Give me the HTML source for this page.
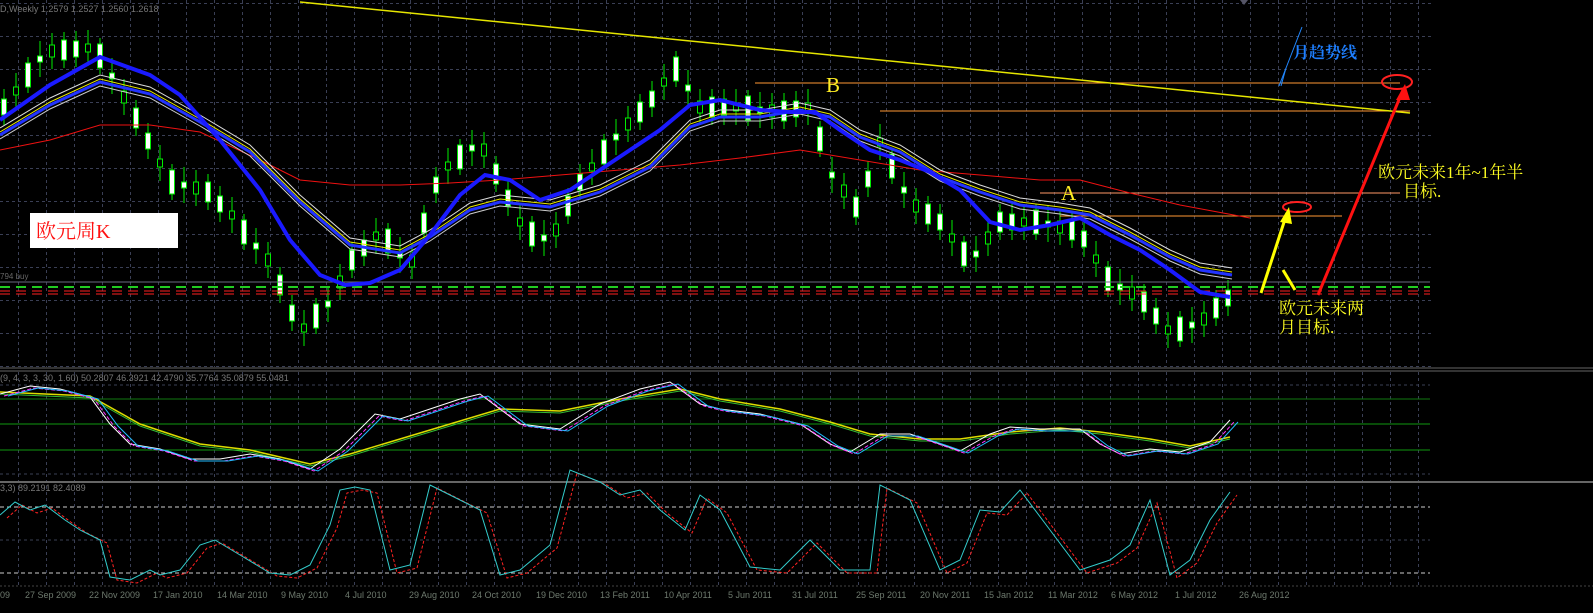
<!DOCTYPE html>
<html><head><meta charset="utf-8"><style>
html,body{margin:0;padding:0;background:#000;}
svg{display:block}
text{font-family:"Liberation Sans",sans-serif;}
.cj{font-family:"Liberation Serif","Noto Serif CJK SC","Noto Sans CJK SC",serif;}
</style></head><body>
<svg width="1593" height="613" viewBox="0 0 1593 613" xmlns="http://www.w3.org/2000/svg">
<defs>
<pattern id="pv" x="18" y="0" width="28" height="6" patternUnits="userSpaceOnUse"><rect x="0" y="0" width="1" height="3" fill="#3a3f55"/></pattern>
<pattern id="ph" x="0" y="3" width="6" height="33" patternUnits="userSpaceOnUse"><rect x="0" y="0" width="3" height="1" fill="#3a3f55"/></pattern>
</defs>
<rect width="1593" height="613" fill="#000"/>
<rect x="0" y="0" width="1432" height="367" fill="url(#pv)"/>
<rect x="0" y="0" width="1432" height="367" fill="url(#ph)"/>
<rect x="0" y="372" width="1432" height="109" fill="url(#pv)"/>
<rect x="0" y="484" width="1432" height="102" fill="url(#pv)"/>
<g stroke="#3a3f55" stroke-dasharray="3,3"><line x1="0" y1="385" x2="1430" y2="385"/><line x1="0" y1="474" x2="1430" y2="474"/><line x1="0" y1="540" x2="1430" y2="540"/></g>
<!-- candles -->
<path fill="none" stroke="#00ee00" stroke-width="1" d="M4 89V125M16 73V109M28 57V93M40 41V77M52 33V69M64 32V68M76 31V67M88 30V66M100 38V74M112 58V94M124 79V115M136 100V136M148 123V159M160 145V181M172 164V200M184 167V203M196 170V206M208 174V210M220 186V222M232 197V233M244 214V250M256 228V264M268 242V278M280 267V303M292 295V331M304 310V346M316 298V334M328 286V322M340 264V300M352 242V278M364 230V266M376 218V254M388 223V259M400 237V273M412 243V279M424 205V241M436 167V203M448 148V184M460 139V175M472 130V166M484 132V168M496 156V192M508 180V216M520 204V240M532 216V252M544 220V256M556 212V248M568 188V224M580 164V200M592 149V185M604 134V170M616 119V155M628 106V142M640 94V130M652 81V117M664 64V100M676 51V87M688 70V106M700 89V125M712 89V125M724 89V125M736 89V125M748 90V126M760 92V128M772 93V129M784 93V129M796 91V127M808 89V125M820 121V157M832 157V193M844 173V209M856 189V225M868 161V197M880 124V160M892 148V184M904 172V208M916 188V224M928 196V232M940 204V240M952 220V256M964 236V272M976 236V272M988 220V256M1000 204V240M1012 204V240M1024 204V240M1036 204V240M1048 206V242M1060 209V245M1072 212V248M1084 221V257M1096 241V277M1108 261V297M1120 269V305M1132 275V311M1144 284V320M1156 298V334M1168 312V348M1180 311V347M1192 307V343M1204 301V337M1216 290V326M1228 280V316"/>
<path fill="#fff" stroke="#00ee00" stroke-width="1" d="M1.5 99h5v16h-5zM25.5 63h5v24h-5zM37.5 56h5v6h-5zM61.5 40h5v20h-5zM73.5 41h5v16h-5zM97.5 44h5v24h-5zM109.5 73h5v6h-5zM133.5 108h5v20h-5zM145.5 133h5v16h-5zM169.5 170h5v24h-5zM181.5 182h5v6h-5zM205.5 182h5v20h-5zM217.5 196h5v16h-5zM241.5 220h5v24h-5zM253.5 243h5v6h-5zM277.5 275h5v20h-5zM289.5 305h5v16h-5zM313.5 304h5v24h-5zM325.5 301h5v6h-5zM349.5 250h5v20h-5zM361.5 240h5v16h-5zM385.5 229h5v24h-5zM397.5 252h5v6h-5zM421.5 213h5v20h-5zM433.5 177h5v16h-5zM457.5 145h5v24h-5zM469.5 145h5v6h-5zM493.5 164h5v20h-5zM505.5 190h5v16h-5zM529.5 222h5v24h-5zM541.5 235h5v6h-5zM565.5 196h5v20h-5zM577.5 174h5v16h-5zM601.5 140h5v24h-5zM613.5 134h5v6h-5zM637.5 102h5v20h-5zM649.5 91h5v16h-5zM673.5 57h5v24h-5zM685.5 85h5v6h-5zM709.5 97h5v20h-5zM721.5 99h5v16h-5zM745.5 96h5v24h-5zM757.5 107h5v6h-5zM781.5 101h5v20h-5zM793.5 101h5v16h-5zM817.5 127h5v24h-5zM829.5 172h5v6h-5zM853.5 197h5v20h-5zM865.5 171h5v16h-5zM889.5 154h5v24h-5zM901.5 187h5v6h-5zM925.5 204h5v20h-5zM937.5 214h5v16h-5zM961.5 242h5v24h-5zM973.5 251h5v6h-5zM997.5 212h5v20h-5zM1009.5 214h5v16h-5zM1033.5 210h5v24h-5zM1045.5 221h5v6h-5zM1069.5 220h5v20h-5zM1081.5 231h5v16h-5zM1105.5 267h5v24h-5zM1117.5 284h5v6h-5zM1141.5 292h5v20h-5zM1153.5 308h5v16h-5zM1177.5 317h5v24h-5zM1189.5 322h5v6h-5zM1213.5 298h5v20h-5zM1225.5 290h5v16h-5z"/>
<path fill="#000" stroke="#00ee00" stroke-width="1" d="M13.5 87h5v8h-5zM49.5 45h5v12h-5zM85.5 44h5v8h-5zM121.5 91h5v12h-5zM157.5 159h5v8h-5zM193.5 182h5v12h-5zM229.5 211h5v8h-5zM265.5 254h5v12h-5zM301.5 324h5v8h-5zM337.5 276h5v12h-5zM373.5 232h5v8h-5zM409.5 255h5v12h-5zM445.5 162h5v8h-5zM481.5 144h5v12h-5zM517.5 218h5v8h-5zM553.5 224h5v12h-5zM589.5 163h5v8h-5zM625.5 118h5v12h-5zM661.5 78h5v8h-5zM697.5 101h5v12h-5zM733.5 103h5v8h-5zM769.5 105h5v12h-5zM805.5 103h5v8h-5zM841.5 185h5v12h-5zM877.5 138h5v8h-5zM913.5 200h5v12h-5zM949.5 234h5v8h-5zM985.5 232h5v12h-5zM1021.5 218h5v8h-5zM1057.5 221h5v12h-5zM1093.5 255h5v8h-5zM1129.5 287h5v12h-5zM1165.5 326h5v8h-5zM1201.5 313h5v12h-5z"/>
<!-- levels -->
<line x1="0" y1="282" x2="1430" y2="282" stroke="#6a6a80"/>
<line x1="0" y1="287" x2="1430" y2="287" stroke="#22cc22" stroke-width="2" stroke-dasharray="10,6"/>
<line x1="0" y1="291" x2="1430" y2="291" stroke="#ff2020" stroke-dasharray="10,6"/>
<line x1="0" y1="294" x2="1430" y2="294" stroke="#ff2020" stroke-dasharray="10,6"/>
<line x1="755" y1="83" x2="1400" y2="83" stroke="#ff9933"/>
<line x1="880" y1="111" x2="1410" y2="111" stroke="#ff9933"/>
<line x1="1040" y1="193" x2="1400" y2="193" stroke="#ff9966"/>
<line x1="1060" y1="216" x2="1342" y2="216" stroke="#ff9933"/>
<line x1="300" y1="2" x2="1410" y2="113" stroke="#e6e600" stroke-width="1.5"/>
<polyline fill="none" stroke="#ee1111" stroke-width="1" points="0,150 50,140 100,125 150,125 200,132 260,160 300,180 350,185 400,185 450,183 500,180 560,175 620,170 680,165 740,158 800,150 860,160 920,170 980,175 1040,180 1080,180 1130,193 1180,205 1250,218"/>
<polyline fill="none" stroke="#dddddd" stroke-width="1" points="0,128 50,98 100,75 150,87 200,115 250,145 300,195 350,238 400,246 430,230 470,203 500,195 550,200 600,185 650,160 690,120 720,110 760,110 800,103 830,110 860,130 900,145 940,170 980,185 1020,198 1060,203 1090,208 1130,228 1170,250 1200,263 1232,268"/>
<polyline fill="none" stroke="#e6e600" stroke-width="1" transform="translate(0,4)" points="0,128 50,98 100,75 150,87 200,115 250,145 300,195 350,238 400,246 430,230 470,203 500,195 550,200 600,185 650,160 690,120 720,110 760,110 800,103 830,110 860,130 900,145 940,170 980,185 1020,198 1060,203 1090,208 1130,228 1170,250 1200,263 1232,268"/>
<polyline fill="none" stroke="#2233ff" stroke-width="3" transform="translate(0,7)" points="0,128 50,98 100,75 150,87 200,115 250,145 300,195 350,238 400,246 430,230 470,203 500,195 550,200 600,185 650,160 690,120 720,110 760,110 800,103 830,110 860,130 900,145 940,170 980,185 1020,198 1060,203 1090,208 1130,228 1170,250 1200,263 1232,268"/>
<polyline fill="none" stroke="#cccccc" stroke-width="1" transform="translate(0,11)" points="0,128 50,98 100,75 150,87 200,115 250,145 300,195 350,238 400,246 430,230 470,203 500,195 550,200 600,185 650,160 690,120 720,110 760,110 800,103 830,110 860,130 900,145 940,170 980,185 1020,198 1060,203 1090,208 1130,228 1170,250 1200,263 1232,268"/>
<polyline fill="none" stroke="#1a1aff" stroke-width="4" points="0,120 50,85 100,57 150,75 180,95 220,140 260,190 290,240 320,275 345,285 370,283 400,270 430,235 460,195 485,175 510,180 540,200 570,190 600,170 630,150 660,130 690,105 720,100 760,110 790,112 815,112 840,130 870,150 900,160 930,172 960,190 990,222 1020,230 1050,225 1080,218 1110,235 1140,250 1170,270 1200,292 1230,297"/>
<!-- annotations -->
<rect x="30" y="213" width="148" height="35" fill="#fff"/>
<text x="36" y="238" class="cj" font-size="20" fill="#ff1111">欧元周K</text>
<text x="826" y="92" class="cj" font-size="21" fill="#ffee22">B</text>
<text x="1061" y="200" class="cj" font-size="21" fill="#ffee22">A</text>
<line x1="1302" y1="27" x2="1279" y2="86" stroke="#2288ff"/>
<line x1="1286" y1="68" x2="1281" y2="86" stroke="#2288ff"/>
<text x="1293" y="58" class="cj" font-size="16" fill="#1e7fff" font-weight="bold">月趋势线</text>
<ellipse cx="1397" cy="82" rx="15" ry="7" fill="none" stroke="#ff2020" stroke-width="2"/>
<ellipse cx="1297" cy="207" rx="14" ry="5" fill="none" stroke="#ff2020" stroke-width="2"/>
<line x1="1318" y1="295" x2="1403" y2="90" stroke="#ff1111" stroke-width="3"/>
<polygon points="1405,84 1396,100 1410,100" fill="#ff1111"/>
<line x1="1261" y1="293" x2="1287" y2="213" stroke="#ffff00" stroke-width="3"/>
<polygon points="1289,207 1280,222 1292,224" fill="#ffff00"/>
<line x1="1283" y1="270" x2="1295" y2="290" stroke="#ffff00" stroke-width="3"/>
<text x="1378" y="178" class="cj" font-size="17" fill="#ffff22">欧元未来1年~1年半</text>
<text x="1403" y="197" class="cj" font-size="17" fill="#ffff22">目标.</text>
<text x="1279" y="314" class="cj" font-size="17" fill="#ffff22">欧元未来两</text>
<text x="1279" y="333" class="cj" font-size="17" fill="#ffff22">月目标.</text>
<text x="0" y="12" font-size="9" fill="#777">D,Weekly  1.2579 1.2527 1.2560 1.2618</text>
<text x="0" y="279" font-size="8" fill="#666">794 buy</text>
<path d="M1240 0 L1248 0 L1244 5 Z" fill="#556"/>
<!-- separators -->
<line x1="0" y1="368" x2="1593" y2="368" stroke="#666"/>
<line x1="0" y1="371" x2="1593" y2="371" stroke="#666"/>
<line x1="0" y1="482" x2="1593" y2="482" stroke="#666" stroke-width="2"/>
<line x1="0" y1="586" x2="1593" y2="586" stroke="#444" stroke-dasharray="2,2"/>
<!-- panel2 -->
<line x1="0" y1="399" x2="1430" y2="399" stroke="#117711"/>
<line x1="0" y1="424" x2="1430" y2="424" stroke="#119911"/>
<line x1="0" y1="450" x2="1430" y2="450" stroke="#119911"/>
<text x="0" y="381" font-size="9" fill="#777">(9, 4, 3, 3, 30, 1.60) 50.2807 46.3921 42.4790 35.7764 35.0879 55.0481</text>
<polyline fill="none" stroke="#dddd00" stroke-width="1.5" points="0,392 90,396 140,424 200,444 250,450 310,464 350,454 400,439 450,424 500,409 560,411 620,399 680,389 720,399 780,409 830,422 870,434 920,439 960,439 1010,432 1060,428 1100,432 1150,439 1190,446 1230,437"/>
<polyline fill="none" stroke="#33bb33" stroke-width="1" points="0,394 90,398 140,426 200,446 250,452 310,466 350,456 400,441 450,426 500,411 560,413 620,401 680,391 720,401 780,411 830,424 870,436 920,441 960,441 1010,434 1060,430 1100,434 1150,441 1190,448 1230,439"/>
<polyline fill="none" stroke="#ffffff" stroke-width="1" points="0,394 30,386 60,389 90,397 110,424 130,444 160,449 190,459 220,459 250,454 280,459 310,469 340,449 375,414 400,419 430,409 460,399 480,394 520,424 560,429 600,404 640,389 670,382 700,404 720,409 760,414 800,424 830,444 850,452 880,434 910,434 940,444 960,451 990,434 1010,427 1040,429 1080,429 1100,444 1120,454 1150,449 1180,452 1210,442 1230,420"/>
<polyline fill="none" stroke="#ff33ff" stroke-width="1" stroke-dasharray="4,2" transform="translate(4,2)" points="0,394 30,386 60,389 90,397 110,424 130,444 160,449 190,459 220,459 250,454 280,459 310,469 340,449 375,414 400,419 430,409 460,399 480,394 520,424 560,429 600,404 640,389 670,382 700,404 720,409 760,414 800,424 830,444 850,452 880,434 910,434 940,444 960,451 990,434 1010,427 1040,429 1080,429 1100,444 1120,454 1150,449 1180,452 1210,442 1230,420"/>
<polyline fill="none" stroke="#22bbff" stroke-width="1" transform="translate(8,2)" points="0,394 30,386 60,389 90,397 110,424 130,444 160,449 190,459 220,459 250,454 280,459 310,469 340,449 375,414 400,419 430,409 460,399 480,394 520,424 560,429 600,404 640,389 670,382 700,404 720,409 760,414 800,424 830,444 850,452 880,434 910,434 940,444 960,451 990,434 1010,427 1040,429 1080,429 1100,444 1120,454 1150,449 1180,452 1210,442 1230,420"/>
<!-- panel3 -->
<line x1="0" y1="507" x2="1430" y2="507" stroke="#cccccc" stroke-dasharray="4,3"/>
<line x1="0" y1="573" x2="1430" y2="573" stroke="#cccccc" stroke-dasharray="4,3"/>
<text x="0" y="491" font-size="9" fill="#777">3,3) 89.2191 82.4089</text>
<polyline fill="none" stroke="#ff2222" stroke-width="1" stroke-dasharray="3,2" transform="translate(7,3)" points="0,515 15,502 30,510 45,505 65,520 80,530 100,540 110,577 130,580 150,570 160,575 180,570 200,545 215,540 240,555 270,573 290,575 310,565 330,525 340,490 355,487 370,490 390,570 410,565 430,485 440,490 480,510 500,575 520,570 550,545 570,470 600,482 620,495 640,490 660,510 685,530 700,495 720,510 750,567 780,570 810,540 840,570 870,570 880,485 910,500 940,570 960,560 980,510 1000,512 1020,490 1050,530 1080,570 1110,560 1130,545 1150,500 1170,575 1190,560 1210,520 1230,492"/>
<polyline fill="none" stroke="#33cccc" stroke-width="1" points="0,515 15,502 30,510 45,505 65,520 80,530 100,540 110,577 130,580 150,570 160,575 180,570 200,545 215,540 240,555 270,573 290,575 310,565 330,525 340,490 355,487 370,490 390,570 410,565 430,485 440,490 480,510 500,575 520,570 550,545 570,470 600,482 620,495 640,490 660,510 685,530 700,495 720,510 750,567 780,570 810,540 840,570 870,570 880,485 910,500 940,570 960,560 980,510 1000,512 1020,490 1050,530 1080,570 1110,560 1130,545 1150,500 1170,575 1190,560 1210,520 1230,492"/>
<g font-size="9" fill="#6e7a6e">
<text x="0" y="598">09</text>
<text x="25" y="598">27 Sep 2009</text><text x="89" y="598">22 Nov 2009</text><text x="153" y="598">17 Jan 2010</text><text x="217" y="598">14 Mar 2010</text><text x="281" y="598">9 May 2010</text><text x="345" y="598">4 Jul 2010</text><text x="409" y="598">29 Aug 2010</text><text x="472" y="598">24 Oct 2010</text><text x="536" y="598">19 Dec 2010</text><text x="600" y="598">13 Feb 2011</text><text x="664" y="598">10 Apr 2011</text><text x="728" y="598">5 Jun 2011</text><text x="792" y="598">31 Jul 2011</text><text x="856" y="598">25 Sep 2011</text><text x="920" y="598">20 Nov 2011</text><text x="984" y="598">15 Jan 2012</text><text x="1048" y="598">11 Mar 2012</text><text x="1111" y="598">6 May 2012</text><text x="1175" y="598">1 Jul 2012</text><text x="1239" y="598">26 Aug 2012</text>
</g>
</svg>
</body></html>
